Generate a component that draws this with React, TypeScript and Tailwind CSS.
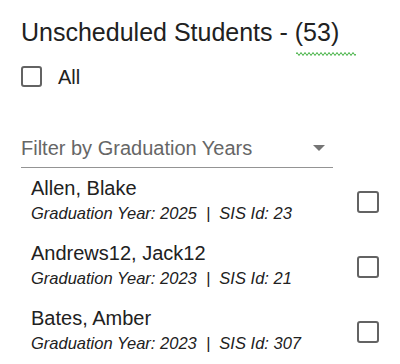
import { ReactNode } from 'react';

interface Student {
  name: string;
  year: number;
  sisId: number;
}

const STUDENTS: Student[] = [
  { name: 'Allen, Blake', year: 2025, sisId: 23 },
  { name: 'Andrews12, Jack12', year: 2023, sisId: 21 },
  { name: 'Bates, Amber', year: 2023, sisId: 307 },
];

export default function App() {
  return (
    <div
      className="w-[400px] h-[364px] overflow-hidden bg-white pl-[21px] pr-[21px] text-[#212121]"
      style={{ fontFamily: '"Liberation Sans", Arial, sans-serif' }}
    >
      {/* Header */}
      <div className="relative pt-[16px] text-[25px] leading-[32px] whitespace-nowrap">
        Unscheduled Students - (53)
        <Squiggle />
      </div>

      {/* Select all */}
      <div className="mt-[13px] h-[31px] flex items-center gap-[16px]">
        <Box size="w-[21px] h-[21px]" />
        <span className="text-[20px] leading-6">All</span>
      </div>

      {/* Graduation year filter */}
      <div className="mt-[44px] w-[312px] flex items-start justify-between pr-[8px] pb-[7px] border-b border-[#949494]">
        <span className="text-[20px] leading-6 text-[#666666]">Filter by Graduation Years</span>
        <svg width="12" height="6" viewBox="0 0 12 6" className="mt-[9px]">
          <path d="M0 0h12L6 6z" fill="#757575" />
        </svg>
      </div>

      {/* Student list */}
      <div className="mt-[1.5px]">
        {STUDENTS.map((s) => (
          <Row key={s.sisId}>
            <div className="flex-1 min-w-0 pl-[10px]">
              <p className="text-[20px] leading-6 -mt-[2px] whitespace-nowrap">{s.name}</p>
              <p className="text-[16.5px] leading-[26px] italic whitespace-pre">
                {`Graduation Year: ${s.year}  |  SIS Id: ${s.sisId}`}
              </p>
            </div>
            <Box size="w-[22px] h-[22px]" />
          </Row>
        ))}
      </div>
    </div>
  );
}

function Row({ children }: { children: ReactNode }) {
  return <div className="h-[65px] flex items-center">{children}</div>;
}

function Box({ size }: { size: string }) {
  return <span className={`${size} shrink-0 border-[2.5px] border-[#636363] rounded-[3px]`} />;
}

function Squiggle() {
  let d = 'M0 2';
  for (let x = 0; x < 60; x += 2) d += ` L${x + 1} ${x % 4 === 0 ? 0.5 : 3.5} L${x + 2} 2`;
  return (
    <svg width="60" height="4" viewBox="0 0 60 4" className="absolute left-[275px] top-[52px]">
      <path d={d} fill="none" stroke="#3cae3c" strokeWidth="1" />
    </svg>
  );
}
